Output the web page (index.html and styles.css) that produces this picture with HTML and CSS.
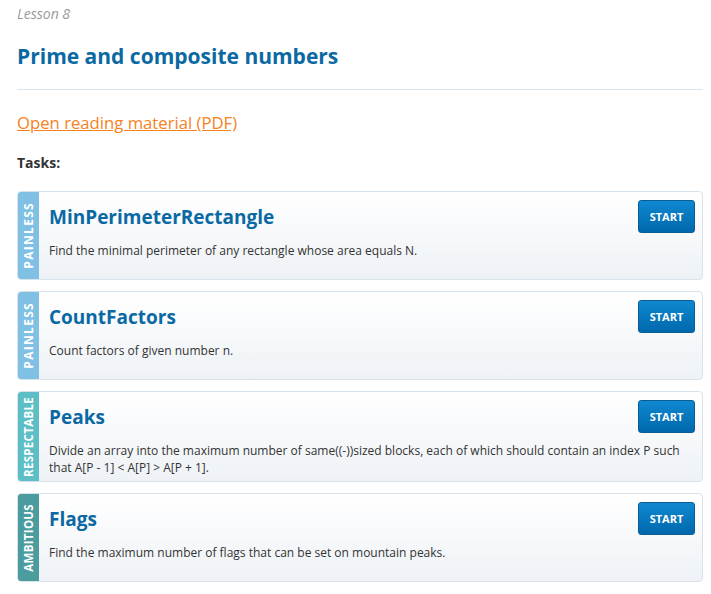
FILE: index.html
```html
<!DOCTYPE html>
<html>
<head>
<meta charset="utf-8">
<link rel="stylesheet" href="styles.css">
</head>
<body>
<div class="page">
  <div class="lesson">Lesson 8</div>
  <h1 class="title">Prime and composite numbers</h1>
  <hr class="rule">
  <a class="pdf" href="#">Open reading material (PDF)</a>
  <div class="tasks-label">Tasks:</div>
  <div class="tasks">
    <div class="card">
      <div class="strip painless"><span class="wide">PAINLESS</span></div>
      <div class="body">
        <a class="start" href="#">START</a>
        <div class="task-title">MinPerimeterRectangle</div>
        <div class="desc">Find the minimal perimeter of any rectangle whose area equals N.</div>
      </div>
    </div>
    <div class="card">
      <div class="strip painless"><span class="wide">PAINLESS</span></div>
      <div class="body">
        <a class="start" href="#">START</a>
        <div class="task-title">CountFactors</div>
        <div class="desc">Count factors of given number n.</div>
      </div>
    </div>
    <div class="card">
      <div class="strip respectable"><span>RESPECTABLE</span></div>
      <div class="body">
        <a class="start" href="#">START</a>
        <div class="task-title">Peaks</div>
        <div class="desc">Divide an array into the maximum number of same((-))sized blocks, each of which should contain an index P such that A[P - 1] &lt; A[P] &gt; A[P + 1].</div>
      </div>
    </div>
    <div class="card">
      <div class="strip ambitious"><span>AMBITIOUS</span></div>
      <div class="body">
        <a class="start" href="#">START</a>
        <div class="task-title">Flags</div>
        <div class="desc">Find the maximum number of flags that can be set on mountain peaks.</div>
      </div>
    </div>
  </div>
</div>
</body>
</html>
```

FILE: styles.css
```css
* { box-sizing: border-box; }
html, body { margin: 0; padding: 0; background: #fff; }
body { font-family: "Open Sans", "Liberation Sans", sans-serif; color: #333; }
.page { padding: 4px 8px 0 17px; }
.lesson { font-style: italic; font-size: 14px; line-height: 20px; color: #9a9a9a; }
.title { margin: 0; padding-top: 17px; font-size: 21px; line-height: 30px; font-weight: 700; color: #0a69a3; }
.rule { margin: 18px 0 0 0; border: 0; border-top: 1px solid #dbe3ea; height: 0; }
.pdf { display: inline-block; margin-top: 21px; font-size: 16.7px; line-height: 24px; color: #f7821e; text-decoration: underline; }
.tasks-label { margin-top: 18px; font-size: 14px; line-height: 20px; font-weight: 700; color: #333; }
.tasks { margin-top: 18px; display: flex; flex-direction: column; gap: 11px; }
.card { display: flex; min-height: 89px; border: 1px solid #d8e2ea; border-radius: 4px; overflow: hidden; background: linear-gradient(#ffffff, #eef2f6); }
.strip { width: 21px; flex: none; display: flex; align-items: center; justify-content: center; }
.strip span { writing-mode: vertical-rl; transform: rotate(180deg); color: #fff; font-weight: 700; font-size: 11.5px; letter-spacing: 0.3px; line-height: 21px; }
.strip span.wide { font-size: 12px; letter-spacing: 1.3px; }
.painless { background: #80c0e4; }
.respectable { background: #5dbfc5; }
.ambitious { background: #4b9c9f; }
.body { flex: 1; padding: 8px 7px 5px 10px; }
.start { float: right; width: 57px; height: 33px; line-height: 31px; text-align: center; color: #fff; font-weight: 700; font-size: 11px; text-decoration: none; border: 1px solid #0b5d93; border-radius: 3px; background: linear-gradient(#0f88d1, #0068ac); margin-left: 8px; }
.task-title { margin-top: 3px; font-size: 19px; line-height: 28px; font-weight: 700; color: #0a69a3; }
.desc { margin-top: 11px; font-size: 12px; line-height: 17px; color: #333; }
```
